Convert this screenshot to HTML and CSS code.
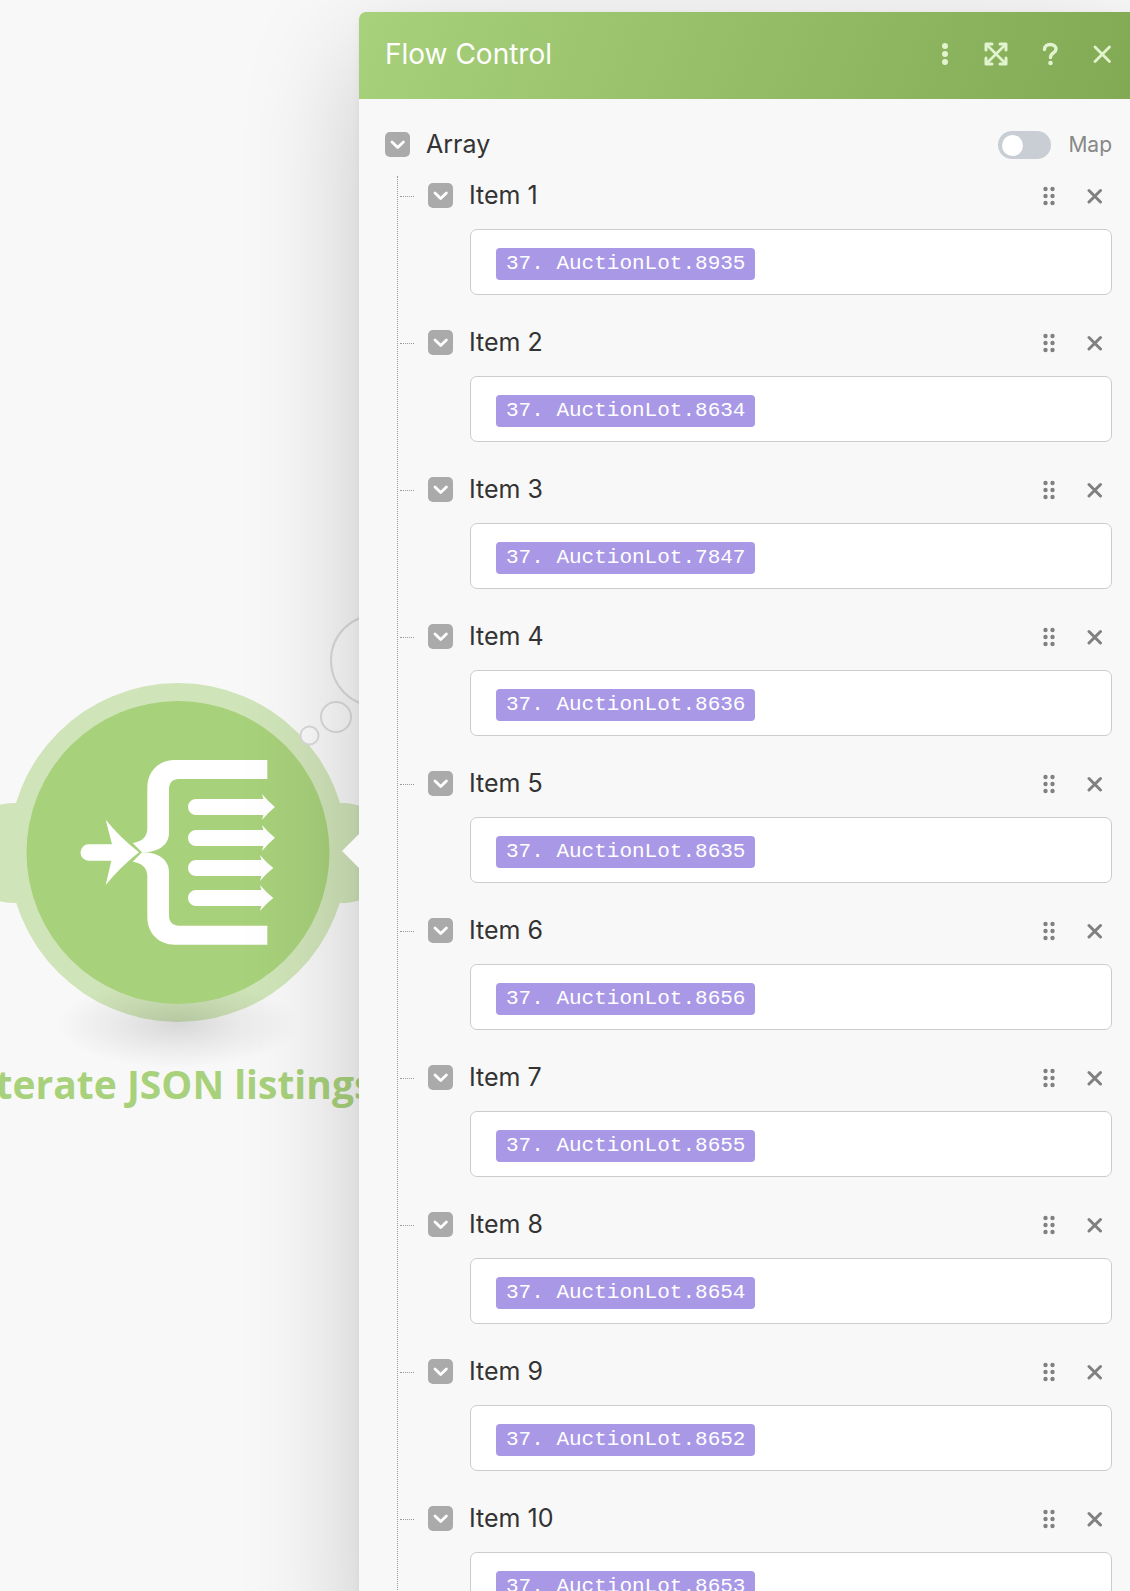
FILE: index.html
```
<!DOCTYPE html>
<html lang="en">
<head>
  <meta charset="UTF-8">
  <meta name="viewport" content="width=device-width, initial-scale=1.0">
  <title>Flow Control</title>
  <link rel="stylesheet" href="styles.css">
</head>
<body>
  <!-- Shared icons -->
  <svg class="icon-defs" aria-hidden="true">
    <symbol id="chevron" viewBox="0 0 25 25">
      <path d="M7 10l5.700 5.500L18.400 10" fill="none" stroke="#fff" stroke-width="2.800" stroke-linecap="round" stroke-linejoin="round"/>
    </symbol>
    <symbol id="grip" viewBox="0 0 14 20">
      <g fill="currentColor">
        <circle cx="3.500" cy="3" r="2.200"/><circle cx="10.500" cy="3" r="2.200"/>
        <circle cx="3.500" cy="10" r="2.200"/><circle cx="10.500" cy="10" r="2.200"/>
        <circle cx="3.500" cy="17" r="2.200"/><circle cx="10.500" cy="17" r="2.200"/>
      </g>
    </symbol>
    <symbol id="cross" viewBox="0 0 16 16">
      <path d="M2 2.500l11.500 11.500M13.500 2.500L2 14" fill="none" stroke="currentColor" stroke-width="3" stroke-linecap="round"/>
    </symbol>
  </svg>

  <main class="workspace">
    <section class="canvas">
      <div class="node">
        <svg class="node-art" viewBox="0 600 356 456" aria-hidden="true">
          <defs>
            <radialGradient id="ground">
              <stop offset="0" stop-color="#000" stop-opacity="0.13"/>
              <stop offset="0.5" stop-color="#000" stop-opacity="0.06"/>
              <stop offset="1" stop-color="#000" stop-opacity="0"/>
            </radialGradient>
          </defs>
          <g fill="#d0e4b9">
            <circle cx="13" cy="853" r="50"/>
            <circle cx="343" cy="853" r="50"/>
            <circle cx="178" cy="852.500" r="169.500"/>
          </g>
          <ellipse cx="178" cy="1024" rx="122" ry="44" fill="url(#ground)"/>
          <circle cx="178" cy="852.500" r="151.500" fill="#a8d17b"/>
          <!-- Iterator glyph -->
          <g transform="translate(0 660) scale(0.33333)" fill="#fff">
            <path d="M266 553H336L317 479Q360 532 417 577Q360 622 317 675L334 602H266A24.500 24.500 0 0 1 266 553Z"/>
            <path id="arm" d="M802 300H525C475 300 442 335 442 383V505C442 530 427 545 398 549L426 577C475 577 507 555 507 518V388C507 369 517 357 537 357H802Z"/>
            <use href="#arm" transform="translate(0 1154) scale(1 -1)"/>
            <path d="M588 417H790L786 402Q804 424 825 441Q804 458 786 480L790 465H588A24 24 0 0 1 588 417Z"/>
            <path d="M588 510H790L786 495Q804 517 825 533Q804 551 786 573L790 558H588A24 24 0 0 1 588 510Z"/>
            <path d="M588 600H784L780 585Q798 607 820 624Q798 641 780 663L784 648H588A24 24 0 0 1 588 600Z"/>
            <path d="M588 690H784L780 675Q798 697 820 714Q798 731 780 753L784 738H588A24 24 0 0 1 588 690Z"/>
          </g>
          <!-- Thought bubbles -->
          <g fill="#fafafa" stroke="#dadada" stroke-width="2">
            <circle cx="309.500" cy="735.500" r="9"/>
            <circle cx="336" cy="717" r="15"/>
            <circle cx="376.500" cy="660.500" r="45.500"/>
          </g>
        </svg>
        <div class="node-name">Iterate JSON listings</div>
      </div>
    </section>

    <section class="panel">
      <header class="panel-header">
        <h1>Flow Control</h1>
        <button class="header-btn more" aria-label="More">
          <svg width="22" height="24" viewBox="0 0 22 24"><g fill="currentColor"><circle cx="11" cy="4" r="3"/><circle cx="11" cy="12" r="3"/><circle cx="11" cy="20" r="3"/></g></svg>
        </button>
        <button class="header-btn expand" aria-label="Expand">
          <svg width="24" height="24" viewBox="0 0 24 24" fill="none" stroke="currentColor" stroke-width="3" stroke-linecap="round" stroke-linejoin="round">
            <path d="M3.500 3.500l17 17M20.500 3.500l-17 17" stroke-width="2.600"/>
            <path d="M2 8V2h6M16 2h6v6M22 16v6h-6M8 22H2v-6"/>
          </svg>
        </button>
        <button class="header-btn help" aria-label="Help">
          <svg width="28" height="24" viewBox="0 0 28 24"><path d="M8.500 7.500C8.500 4.200 10.800 2.500 14.200 2.500C17.700 2.500 20 4.400 20 7.300C20 11.200 14.500 10.800 14.500 15.500" fill="none" stroke="currentColor" stroke-width="3.400" stroke-linecap="round"/><circle cx="14.500" cy="21" r="2.300" fill="currentColor"/></svg>
        </button>
        <button class="header-btn close" aria-label="Close">
          <svg width="20" height="24" viewBox="0 0 20 24"><path d="M3 5l14.500 14.500M17.500 5L3 19.500" fill="none" stroke="currentColor" stroke-width="2.800" stroke-linecap="round"/></svg>
        </button>
      </header>

      <div class="panel-body">
        <div class="array-row">
          <button class="collapse" aria-label="Collapse Array"><svg><use href="#chevron"/></svg></button>
          <span class="row-label">Array</span>
          <label class="map">
            <input type="checkbox" class="switch">
            Map
          </label>
        </div>

        <ul class="items">
          <li class="item">
            <div class="item-row">
              <button class="collapse" aria-label="Collapse"><svg><use href="#chevron"/></svg></button>
              <label class="row-label" for="item1">Item 1</label>
              <button class="tool grip" aria-label="Move"><svg><use href="#grip"/></svg></button>
              <button class="tool remove" aria-label="Remove"><svg><use href="#cross"/></svg></button>
            </div>
            <div class="field"><span class="pill">37. AuctionLot.8935</span><input type="text" id="item1"></div>
          </li>
          <li class="item">
            <div class="item-row">
              <button class="collapse" aria-label="Collapse"><svg><use href="#chevron"/></svg></button>
              <label class="row-label" for="item2">Item 2</label>
              <button class="tool grip" aria-label="Move"><svg><use href="#grip"/></svg></button>
              <button class="tool remove" aria-label="Remove"><svg><use href="#cross"/></svg></button>
            </div>
            <div class="field"><span class="pill">37. AuctionLot.8634</span><input type="text" id="item2"></div>
          </li>
          <li class="item">
            <div class="item-row">
              <button class="collapse" aria-label="Collapse"><svg><use href="#chevron"/></svg></button>
              <label class="row-label" for="item3">Item 3</label>
              <button class="tool grip" aria-label="Move"><svg><use href="#grip"/></svg></button>
              <button class="tool remove" aria-label="Remove"><svg><use href="#cross"/></svg></button>
            </div>
            <div class="field"><span class="pill">37. AuctionLot.7847</span><input type="text" id="item3"></div>
          </li>
          <li class="item">
            <div class="item-row">
              <button class="collapse" aria-label="Collapse"><svg><use href="#chevron"/></svg></button>
              <label class="row-label" for="item4">Item 4</label>
              <button class="tool grip" aria-label="Move"><svg><use href="#grip"/></svg></button>
              <button class="tool remove" aria-label="Remove"><svg><use href="#cross"/></svg></button>
            </div>
            <div class="field"><span class="pill">37. AuctionLot.8636</span><input type="text" id="item4"></div>
          </li>
          <li class="item">
            <div class="item-row">
              <button class="collapse" aria-label="Collapse"><svg><use href="#chevron"/></svg></button>
              <label class="row-label" for="item5">Item 5</label>
              <button class="tool grip" aria-label="Move"><svg><use href="#grip"/></svg></button>
              <button class="tool remove" aria-label="Remove"><svg><use href="#cross"/></svg></button>
            </div>
            <div class="field"><span class="pill">37. AuctionLot.8635</span><input type="text" id="item5"></div>
          </li>
          <li class="item">
            <div class="item-row">
              <button class="collapse" aria-label="Collapse"><svg><use href="#chevron"/></svg></button>
              <label class="row-label" for="item6">Item 6</label>
              <button class="tool grip" aria-label="Move"><svg><use href="#grip"/></svg></button>
              <button class="tool remove" aria-label="Remove"><svg><use href="#cross"/></svg></button>
            </div>
            <div class="field"><span class="pill">37. AuctionLot.8656</span><input type="text" id="item6"></div>
          </li>
          <li class="item">
            <div class="item-row">
              <button class="collapse" aria-label="Collapse"><svg><use href="#chevron"/></svg></button>
              <label class="row-label" for="item7">Item 7</label>
              <button class="tool grip" aria-label="Move"><svg><use href="#grip"/></svg></button>
              <button class="tool remove" aria-label="Remove"><svg><use href="#cross"/></svg></button>
            </div>
            <div class="field"><span class="pill">37. AuctionLot.8655</span><input type="text" id="item7"></div>
          </li>
          <li class="item">
            <div class="item-row">
              <button class="collapse" aria-label="Collapse"><svg><use href="#chevron"/></svg></button>
              <label class="row-label" for="item8">Item 8</label>
              <button class="tool grip" aria-label="Move"><svg><use href="#grip"/></svg></button>
              <button class="tool remove" aria-label="Remove"><svg><use href="#cross"/></svg></button>
            </div>
            <div class="field"><span class="pill">37. AuctionLot.8654</span><input type="text" id="item8"></div>
          </li>
          <li class="item">
            <div class="item-row">
              <button class="collapse" aria-label="Collapse"><svg><use href="#chevron"/></svg></button>
              <label class="row-label" for="item9">Item 9</label>
              <button class="tool grip" aria-label="Move"><svg><use href="#grip"/></svg></button>
              <button class="tool remove" aria-label="Remove"><svg><use href="#cross"/></svg></button>
            </div>
            <div class="field"><span class="pill">37. AuctionLot.8652</span><input type="text" id="item9"></div>
          </li>
          <li class="item">
            <div class="item-row">
              <button class="collapse" aria-label="Collapse"><svg><use href="#chevron"/></svg></button>
              <label class="row-label" for="item10">Item 10</label>
              <button class="tool grip" aria-label="Move"><svg><use href="#grip"/></svg></button>
              <button class="tool remove" aria-label="Remove"><svg><use href="#cross"/></svg></button>
            </div>
            <div class="field"><span class="pill">37. AuctionLot.8653</span><input type="text" id="item10"></div>
          </li>
        </ul>
      </div>
    </section>
  </main>
</body>
</html>
```
FILE: styles.css
```
* { box-sizing: border-box; }
body {
  margin: 0;
  background: #f8f8f8;
  color: #333;
  font-family: Inter, "Liberation Sans", sans-serif;
}
button {
  padding: 0;
  border: none;
  background: none;
  cursor: pointer;
}
svg { display: block; }
.icon-defs { position: absolute; width: 0; height: 0; }

.workspace {
  display: flex;
  height: 100vh;
  overflow: hidden;
}

/* Scenario canvas */
.canvas {
  position: relative;
  flex: 0 0 359px;
}
.node {
  position: absolute;
  top: 600px;
  left: 0;
  width: 356px;
  display: flex;
  flex-direction: column;
  align-items: center;
}
.node-art { width: 356px; height: 456px; overflow: visible; }
.node-name {
  font-family: "Open Sans", "Noto Sans", sans-serif;
  font-size: 39px;
  font-weight: 700;
  line-height: 56px;
  color: #a8d17b;
  white-space: nowrap;
}

/* Settings panel */
.panel {
  position: relative;
  flex: 1;
  align-self: flex-start;
  margin-top: 12px;
  background: #f8f8f8;
  border-radius: 7px 0 0 0;
  box-shadow: 0 40px 120px rgba(0,0,0,0.2), 0 2px 6px rgba(0,0,0,0.05);
}
/* Pointer towards the node */
.panel::before {
  content: "";
  position: absolute;
  top: 822px;
  left: -17px;
  border: solid transparent;
  border-width: 17px 17px 17px 0;
  border-right-color: #f8f8f8;
}
.panel-header {
  display: flex;
  align-items: center;
  gap: 28px;
  height: 87px;
  padding: 0 18px 4px 26px;
  border-radius: 7px 0 0 0;
  background: linear-gradient(110deg, #a8d17b 0%, #82a954 100%);
}
.panel-header h1 {
  flex: 1;
  margin: 0;
  font-size: 28px;
  font-weight: 400;
  line-height: 36px;
  color: #fff;
}
.header-btn { color: #e2f3cf; }

.panel-body { padding: 26px 18px 0 26px; }
.array-row, .item-row {
  display: flex;
  align-items: center;
  height: 40px;
}
.array-row { margin-bottom: 11px; }
.row-label {
  flex: 1;
  margin: 0 0 2px 16px;
  font-size: 25px;
  line-height: 32px;
}
.collapse {
  width: 25px;
  height: 25px;
  margin-bottom: 2px;
  border-radius: 5px;
  background: #aaa;
}
.collapse svg { width: 25px; height: 25px; }

.map {
  display: flex;
  align-items: center;
  gap: 17px;
  font-size: 21px;
  line-height: 28px;
  color: #888;
}
.switch {
  appearance: none;
  display: flex;
  align-items: center;
  width: 53px;
  height: 28px;
  margin: 0;
  padding: 0 4px;
  border-radius: 14px;
  background: #c9ced5;
}
.switch::before {
  content: "";
  width: 21px;
  height: 21px;
  border-radius: 50%;
  background: #fff;
}
.switch:checked { justify-content: flex-end; background: #a8d17b; }

.items {
  margin: 0 0 0 12px;
  padding: 0;
  list-style: none;
  border-left: 1px dotted #999;
}
.item { padding-bottom: 28px; }
.item-row::before {
  content: "";
  width: 14px;
  margin: 0 14px 0 2px;
  border-top: 1px dotted #999;
}
.tool { color: #808080; }
.grip { margin-right: 31px; }
.grip svg { width: 14px; height: 20px; }
.remove { margin-right: 9px; }
.remove svg { width: 16px; height: 16px; }

.field {
  display: flex;
  align-items: center;
  gap: 8px;
  height: 66px;
  margin: 13px 0 0 72px;
  padding: 4px 25px 0;
  border: 1px solid #ccc;
  border-radius: 7px;
  background: #fff;
}
.pill, .field input {
  font-family: "Courier New", "Liberation Mono", monospace;
  font-size: 21px;
  line-height: 32px;
}
.pill {
  padding: 0 10px;
  border-radius: 4px;
  background: #a998e6;
  color: #fff;
  white-space: nowrap;
}
.field input {
  flex: 1;
  min-width: 0;
  padding: 0;
  border: none;
  outline: none;
  background: none;
}
```
